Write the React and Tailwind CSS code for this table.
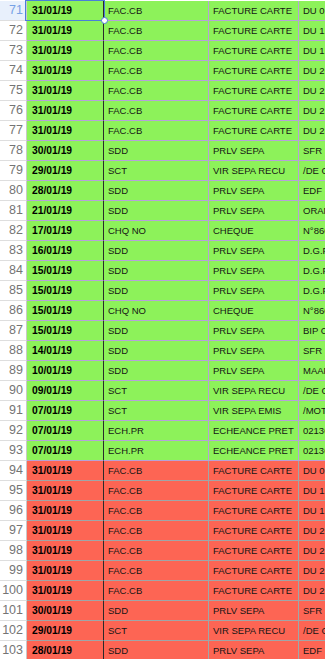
import React from "react";

const G = "green";
const R = "red";
const rows = [
  [71, "31/01/19", "FAC.CB", "FACTURE CARTE", "DU 010119", G],
  [72, "31/01/19", "FAC.CB", "FACTURE CARTE", "DU 120119", G],
  [73, "31/01/19", "FAC.CB", "FACTURE CARTE", "DU 150119", G],
  [74, "31/01/19", "FAC.CB", "FACTURE CARTE", "DU 200119", G],
  [75, "31/01/19", "FAC.CB", "FACTURE CARTE", "DU 220119", G],
  [76, "31/01/19", "FAC.CB", "FACTURE CARTE", "DU 250119", G],
  [77, "31/01/19", "FAC.CB", "FACTURE CARTE", "DU 280119", G],
  [78, "30/01/19", "SDD", "PRLV SEPA", "SFR", G],
  [79, "29/01/19", "SCT", "VIR SEPA RECU", "/DE CAF", G],
  [80, "28/01/19", "SDD", "PRLV SEPA", "EDF", G],
  [81, "21/01/19", "SDD", "PRLV SEPA", "ORANGE", G],
  [82, "17/01/19", "CHQ NO", "CHEQUE", "N°8600001", G],
  [83, "16/01/19", "SDD", "PRLV SEPA", "D.G.F.I.P", G],
  [84, "15/01/19", "SDD", "PRLV SEPA", "D.G.F.I.P", G],
  [85, "15/01/19", "SDD", "PRLV SEPA", "D.G.F.I.P", G],
  [86, "15/01/19", "CHQ NO", "CHEQUE", "N°8600002", G],
  [87, "15/01/19", "SDD", "PRLV SEPA", "BIP CB", G],
  [88, "14/01/19", "SDD", "PRLV SEPA", "SFR", G],
  [89, "10/01/19", "SDD", "PRLV SEPA", "MAAF", G],
  [90, "09/01/19", "SCT", "VIR SEPA RECU", "/DE CAF", G],
  [91, "07/01/19", "SCT", "VIR SEPA EMIS", "/MOTIF", G],
  [92, "07/01/19", "ECH.PR", "ECHEANCE PRET", "02130000", G],
  [93, "07/01/19", "ECH.PR", "ECHEANCE PRET", "02130000", G],
  [94, "31/01/19", "FAC.CB", "FACTURE CARTE", "DU 010119", R],
  [95, "31/01/19", "FAC.CB", "FACTURE CARTE", "DU 120119", R],
  [96, "31/01/19", "FAC.CB", "FACTURE CARTE", "DU 150119", R],
  [97, "31/01/19", "FAC.CB", "FACTURE CARTE", "DU 200119", R],
  [98, "31/01/19", "FAC.CB", "FACTURE CARTE", "DU 220119", R],
  [99, "31/01/19", "FAC.CB", "FACTURE CARTE", "DU 250119", R],
  [100, "31/01/19", "FAC.CB", "FACTURE CARTE", "DU 280119", R],
  [101, "30/01/19", "SDD", "PRLV SEPA", "SFR", R],
  [102, "29/01/19", "SCT", "VIR SEPA RECU", "/DE CAF", R],
  [103, "28/01/19", "SDD", "PRLV SEPA", "EDF", R],
];

function Row({ r, first }) {
  const [num, date, code, label, d, color] = r;
  const green = color === G;
  const bg = green ? "bg-[#8df25a]" : "bg-[#fd6554]";
  const line = green ? "border-[#b6a2d8]" : "border-[#a0a6a8]";
  return (
    <div className="flex h-[20px] leading-none">
      <div
        className={
          "w-[27px] shrink-0 flex items-center justify-end pr-[3px] border-r border-b border-r-[#c9c9c9] border-b-[#dedede] text-[12.5px] " +
          (first ? "bg-[#e8f0fc] text-[#76a2e6]" : "bg-white text-[#747474]")
        }
      >
        {num}
      </div>
      <div
        className={
          "w-[77px] shrink-0 flex items-center pl-[5px] pt-[1px] border-b border-r border-r-[#2a2a2a] font-bold text-[10.3px] text-black " +
          bg +
          " " +
          line
        }
      >
        {date}
      </div>
      <div
        className={
          "w-[105px] shrink-0 flex items-center pl-[4px] pt-[1px] border-b border-r text-[9.5px] text-[#151515] " +
          bg +
          " " +
          line
        }
      >
        {code}
      </div>
      <div
        className={
          "w-[90px] shrink-0 flex items-center pl-[4px] pt-[1px] border-b border-r text-[9.5px] text-[#151515] whitespace-nowrap " +
          bg +
          " " +
          line
        }
      >
        {label}
      </div>
      <div
        className={
          "flex-1 min-w-0 overflow-hidden whitespace-nowrap flex items-center pl-[4px] pt-[1px] border-b text-[9.5px] text-[#151515] " +
          bg +
          " " +
          line
        }
      >
        {d}
      </div>
    </div>
  );
}

export default function App() {
  return (
    <div
      className="relative w-[325px] h-[659px] overflow-hidden bg-white pt-[1px]"
      style={{ fontFamily: '"Liberation Sans", Arial, sans-serif' }}
    >
      {rows.map((r, i) => (
        <Row key={r[0]} r={r} first={i === 0} />
      ))}
      <div className="absolute left-[25px] top-0 w-[80px] h-[21px] border border-[#4a7fd8] pointer-events-none" />
      <div className="absolute left-[101px] top-[17px] w-[7px] h-[7px] rounded-full bg-white border border-[#4a7fd8]" />
    </div>
  );
}
